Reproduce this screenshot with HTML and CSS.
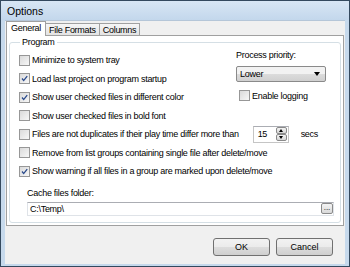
FILE: index.html
```html
<!DOCTYPE html>
<html lang="en">
<head>
  <meta charset="UTF-8" />
  <title>Options</title>
  <link rel="stylesheet" href="styles.css">
</head>
<body>
  <div class="window">
    <div class="titlebar">Options</div>
    <div class="client">
      <div class="tabs">
        <div class="tab active">General</div>
        <div class="tab">File Formats</div>
        <div class="tab">Columns</div>
      </div>

      <div class="panel">
        <fieldset class="group">
          <legend>Program</legend>

          <div class="top">
            <div class="col">
              <label class="row"><span class="box"></span>Minimize to system tray</label>
              <label class="row"><span class="box"><svg viewBox="0 0 11 11"><path d="M2.5 5.5 L4.5 8 L8.8 2.5" /></svg></span>Load last project on program startup</label>
              <label class="row"><span class="box"><svg viewBox="0 0 11 11"><path d="M2.5 5.5 L4.5 8 L8.8 2.5" /></svg></span>Show user checked files in different color</label>
            </div>
            <div class="side">
              <div class="side-label">Process priority:</div>
              <div class="combo">Lower<span class="arrow"></span></div>
              <label class="logging"><span class="box"></span>Enable logging</label>
            </div>
          </div>

          <label class="row"><span class="box"></span>Show user checked files in bold font</label>
          <div class="row">
            <span class="box"></span>Files are not duplicates if their play time differ more than
            <div class="spin">
              <span class="spin-value">15</span>
              <span class="spin-btns">
                <span class="spin-up"></span>
                <span class="spin-down"></span>
              </span>
            </div>
            <span class="unit">secs</span>
          </div>
          <label class="row"><span class="box"></span>Remove from list groups containing single file after delete/move</label>
          <label class="row"><span class="box"><svg viewBox="0 0 11 11"><path d="M2.5 5.5 L4.5 8 L8.8 2.5" /></svg></span>Show warning if all files in a group are marked upon delete/move</label>

          <div class="cache">
            <div class="cache-label">Cache files folder:</div>
            <div class="edit">C:\Temp\<span class="browse">...</span></div>
          </div>
        </fieldset>
      </div>

      <div class="buttons">
        <button>OK</button>
        <button>Cancel</button>
      </div>
    </div>
  </div>
</body>
</html>
```

FILE: styles.css
```css
:root {
  --frame: #c6d9ec;
  --frame-dark: #34495e;
  --face: #f0f0f0;
  --border: #a0a0a0;
  --light-border: #d5dfe5;
  --text: #000;
}

body {
  margin: 0;
  font-family: 'Liberation Sans', Arial, sans-serif;
  font-size: 9px;
  letter-spacing: -0.28px;
  color: var(--text);
  background: #fff;
}

.window {
  width: 350px;
  height: 267px;
  box-sizing: border-box;
  border: 1px solid var(--frame-dark);
  background: var(--frame);
  padding: 0 4px 2px;
  display: flex;
  flex-direction: column;
}

.titlebar {
  height: 19px;
  box-sizing: border-box;
  margin: 0 -4px;
  padding: 2px 0 0 6px;
  line-height: 17px;
  font-size: 10.5px;
  letter-spacing: 0;
  background: linear-gradient(#d8e6f4, #c3d7ec);
}

.client {
  flex: 1;
  background: var(--face);
  border-top: 1px solid #b5c6d8;
  display: flex;
  flex-direction: column;
}

/* tabs */
.tabs {
  display: flex;
  align-items: flex-end;
  height: 14px;
  padding-left: 1px;
}

.tab {
  height: 12px;
  line-height: 12px;
  padding: 0 3px;
  border: 1px solid var(--border);
  border-bottom: none;
  border-left: none;
  background: linear-gradient(#f6f6f6, #e3e3e3);
  box-sizing: border-box;
}

.tab.active {
  height: 15px;
  margin-bottom: -1px;
  padding: 0 4px;
  border-left: 1px solid var(--border);
  background: #fff;
  position: relative;
  z-index: 1;
}

.panel {
  height: 191px;
  margin: 0 1px;
  box-sizing: border-box;
  border: 1px solid var(--border);
  background: #fff;
  padding: 1px 2px 0;
}

/* group box */
.group {
  margin: 0;
  padding: 0 6px 6px 9px;
  border: 1px solid var(--light-border);
  border-radius: 3px;
  min-width: 0;
}

.group legend {
  padding: 0 2px;
  margin-left: 1px;
  line-height: 11px;
}

.top {
  display: flex;
  justify-content: space-between;
  padding-top: 3px;
}

.row {
  display: flex;
  align-items: center;
  height: 18.5px;
  white-space: nowrap;
}

.box {
  width: 11px;
  height: 11px;
  box-sizing: border-box;
  border: 1px solid #979797;
  background: linear-gradient(135deg, #dadada, #f7f7f7);
  margin-right: 2px;
  flex: none;
  display: flex;
}

.box svg {
  width: 9px;
  height: 9px;
  fill: none;
  stroke: #2a4a8c;
  stroke-width: 1.6;
}

.side {
  width: 90px;
  margin-top: -1px;
  margin-right: 8px;
}

.side-label {
  line-height: 11px;
}

.combo {
  height: 16px;
  margin-top: 5px;
  box-sizing: border-box;
  border: 1px solid #8a8a8a;
  border-radius: 2px;
  background: linear-gradient(#f2f2f2 50%, #dcdcdc 50%, #d0d0d0);
  padding-left: 3px;
  line-height: 14px;
  display: flex;
  justify-content: space-between;
  align-items: center;
}

.arrow {
  width: 0;
  height: 0;
  margin-right: 5px;
  border-left: 3.5px solid transparent;
  border-right: 3.5px solid transparent;
  border-top: 4px solid #000;
}

.logging {
  display: flex;
  align-items: center;
  height: 13px;
  margin-top: 7px;
  padding-left: 3px;
}

/* spin edit */
.spin {
  width: 36px;
  height: 17px;
  margin-left: 14px;
  box-sizing: border-box;
  border: 1px solid #c5c5c5;
  border-top-color: #abadb3;
  background: #fff;
  display: flex;
  justify-content: space-between;
  align-items: center;
  padding: 1px;
}

.spin-value {
  padding-left: 3px;
}

.spin-btns {
  display: flex;
  flex-direction: column;
  width: 11px;
  height: 14px;
}

.spin-up,
.spin-down {
  flex: 1;
  border: 1px solid #8a8a8a;
  border-radius: 2px;
  background: linear-gradient(#f4f4f4, #d6d6d6);
  display: flex;
  justify-content: center;
  align-items: center;
}

.spin-up::after {
  content: '';
  border-left: 2.5px solid transparent;
  border-right: 2.5px solid transparent;
  border-bottom: 3px solid #000;
}

.spin-down::after {
  content: '';
  border-left: 2.5px solid transparent;
  border-right: 2.5px solid transparent;
  border-top: 3px solid #000;
}

.unit {
  margin-left: 12px;
}

/* cache folder */
.cache {
  margin-top: 7px;
  padding-left: 8px;
}

.cache-label {
  line-height: 11px;
}

.edit {
  height: 14px;
  margin-top: 3px;
  box-sizing: border-box;
  border: 1px solid #dfe3e8;
  border-top-color: #abadb3;
  background: #fff;
  padding-left: 2px;
  line-height: 12px;
  display: flex;
  justify-content: space-between;
  align-items: center;
}

.browse {
  width: 12px;
  height: 11px;
  box-sizing: border-box;
  border: 1px solid #8a8a8a;
  border-radius: 2px;
  background: linear-gradient(#f4f4f4, #d9d9d9);
  font-size: 8px;
  letter-spacing: 0;
  line-height: 7px;
  text-align: center;
}

/* dialog buttons */
.buttons {
  display: flex;
  justify-content: flex-end;
  gap: 6px;
  padding: 12px 12px 0 0;
}

button {
  width: 57px;
  height: 18px;
  border: 1px solid #707070;
  border-radius: 3px;
  background: linear-gradient(#f2f2f2 0%, #ebebeb 50%, #dddddd 50%, #cfcfcf 100%);
  font-family: 'Liberation Sans', Arial, sans-serif;
  font-size: 9px;
  color: var(--text);
  padding: 0;
}
```
